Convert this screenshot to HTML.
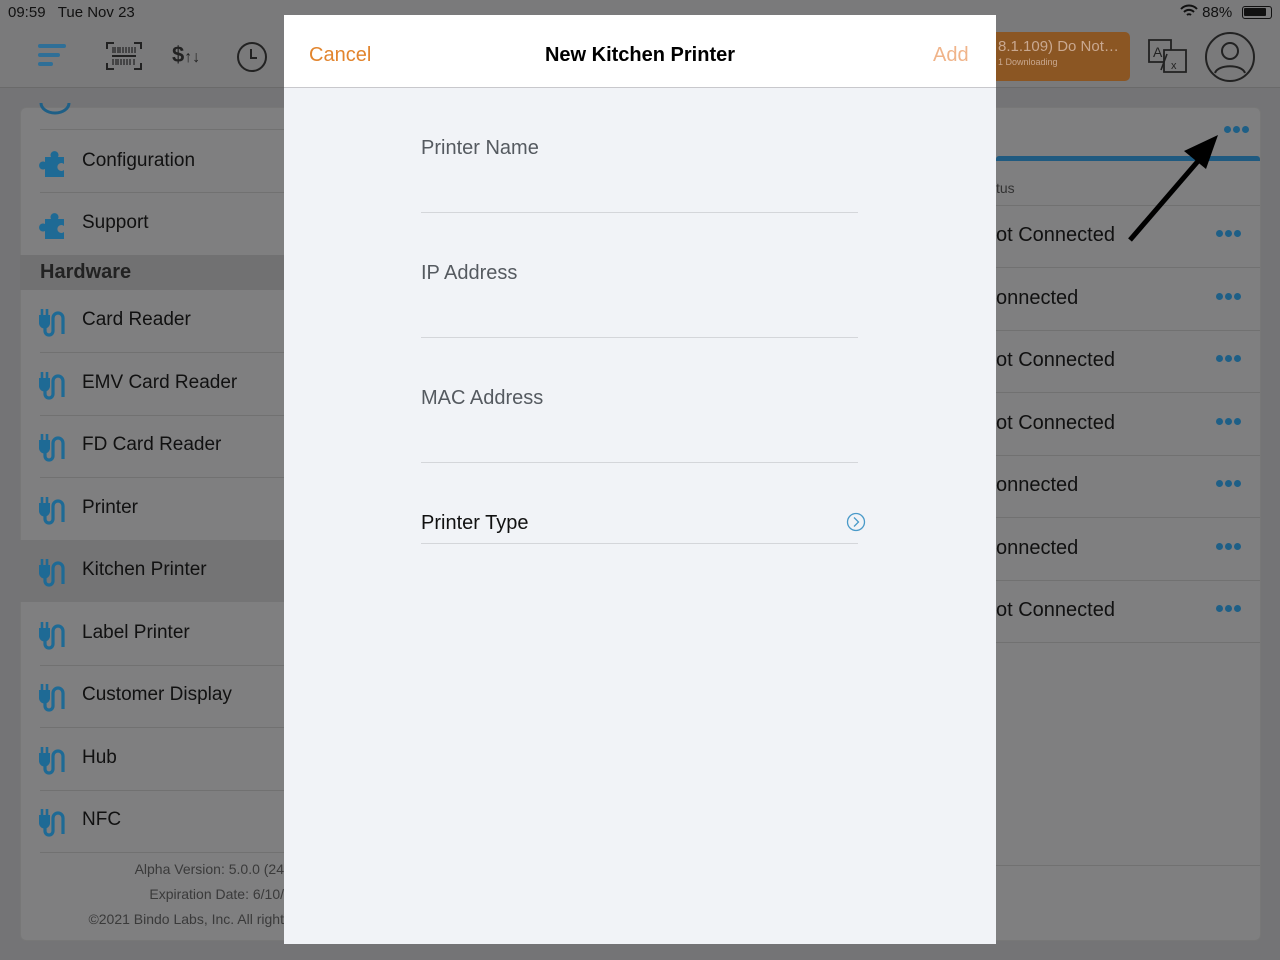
<!DOCTYPE html>
<html><head><meta charset="utf-8"><style>
*{margin:0;padding:0;box-sizing:border-box}
body{width:1280px;height:960px;background:#747476;font-family:"Liberation Sans",sans-serif;position:relative;overflow:hidden;color:#111}
.abs{position:absolute}
.top{left:0;top:0;width:1280px;height:88px;background:#7a7a7b;border-bottom:1px solid #6a6a6a}
.card{background:#7f7f80;border:1px solid #777;border-radius:6px}
.row{position:absolute;left:0;width:264px;height:62px;font-size:19px}
.row span{position:absolute;left:62px;top:19px}
.row svg{position:absolute;left:18px;top:16px}
.sep{position:absolute;left:20px;width:260px;height:1px;background:#717171}
.rrow{position:absolute;left:996px;width:264px;height:62px;border-bottom:1px solid #717171;font-size:20px}
.rrow span{position:absolute;left:0;top:18px;overflow:hidden;white-space:nowrap}
.dots{position:absolute;left:220px;top:24px;display:flex;gap:2px;line-height:0}
.dots i{display:block;width:7px;height:7px;border-radius:50%;background:#1e5f86}
.modal{left:284px;top:15px;width:712px;height:929px;background:#f1f3f7}
.mh{left:0;top:0;width:712px;height:73px;background:#fff;border-bottom:1px solid #c8c8cc}
.lbl{position:absolute;left:137px;font-size:20px;color:#555a60}
.line{position:absolute;left:137px;width:437px;height:1px;background:#d4d6da}
</style></head><body>
<div class="abs top"></div>
<div class="abs" style="left:8px;top:4px;font-size:15px;color:#111">09:59&nbsp;&nbsp; Tue Nov 23</div>
<div class="abs" style="left:1180px;top:4px;font-size:15px;color:#111">
<svg width="18" height="14" viewBox="0 0 18 14" style="vertical-align:-1px"><path d="M1 5a11 11 0 0 1 16 0M4 8a7 7 0 0 1 10 0M7 11a3 3 0 0 1 4 0" stroke="#111" stroke-width="2" fill="none"/></svg> 88%</div>
<div class="abs" style="left:1242px;top:6px;width:30px;height:13px;border:1.5px solid #111;border-radius:3px;padding:1px"><div style="width:22px;height:8px;background:#111;border-radius:1px"></div></div>
<svg class="abs" style="left:38px;top:44px" width="30" height="24"><rect x="0" y="0" width="28" height="4" rx="2" fill="#2f6f97"/><rect x="0" y="9" width="22" height="4" rx="2" fill="#2f6f97"/><rect x="0" y="18" width="15" height="4" rx="2" fill="#2f6f97"/></svg>
<svg class="abs" style="left:106px;top:42px" width="36" height="28"><path d="M1 7V1h7M28 1h7v6M1 21v6h7M35 21v6h-7" stroke="#222" stroke-width="2" fill="none"/><rect x="6" y="13" width="24" height="2" fill="#222"/><path d="M7 5v6M9 5v6M12 5v6M14 5v6M17 5v6M20 5v6M23 5v6M26 5v6M29 5v6M7 17v6M10 17v6M12 17v6M15 17v6M18 17v6M21 17v6M24 17v6M28 17v6" stroke="#222" stroke-width="1.2"/></svg>
<div class="abs" style="left:172px;top:42px;font-size:22px;font-weight:bold;color:#222">$<span style="font-size:16px">↑↓</span></div>
<svg class="abs" style="left:236px;top:41px" width="32" height="32"><circle cx="16" cy="16" r="14" stroke="#222" stroke-width="2" fill="none"/><path d="M15 8v9h6" stroke="#222" stroke-width="2" fill="none"/></svg>
<div class="abs" style="left:990px;top:32px;width:140px;height:49px;background:#8b5623;border-radius:5px;color:#c9a890;padding:6px 8px;font-size:15px">8.1.109) Do Not…<div style="font-size:9px;margin-top:2px">1 Downloading</div></div>
<svg class="abs" style="left:1148px;top:38px" width="40" height="36"><path d="M1 2h22v22H1z" stroke="#222" stroke-width="1.8" fill="none"/><path d="M16 12h22v22H16z" stroke="#222" stroke-width="1.8" fill="#7a7a7b"/><text x="5" y="19" font-size="14" font-family="Liberation Sans" fill="#222">A</text><path d="M13 32l6-16" stroke="#222" stroke-width="1.6"/><text x="23" y="31" font-size="11" font-family="Liberation Sans" fill="#222">x</text></svg>
<svg class="abs" style="left:1204px;top:31px" width="52" height="52"><circle cx="26" cy="26" r="24" stroke="#222" stroke-width="2" fill="none"/><circle cx="26" cy="20" r="8" stroke="#222" stroke-width="2" fill="none"/><path d="M11 42c3-9 27-9 30 0" stroke="#222" stroke-width="2" fill="none"/></svg>

<div class="abs card" style="left:20px;top:107px;width:290px;height:834px"></div>
<div class="abs" style="left:20px;top:107px;width:264px;height:834px">
<svg class="abs" style="left:18px;top:-4px" width="34" height="12"><path d="M3 0a14 10 0 0 0 28 0" stroke="#1e5f86" stroke-width="3" fill="none"/></svg>
<div class="sep" style="top:22px"></div>
<div class="row" style="top:24px"><svg width="32" height="32" viewBox="0 0 32 32"><path d="M7 10h6a4 4 0 1 1 7 0h6v7a4 4 0 1 0 0 6v7H7v-8a4 4 0 1 1 0-7z" fill="#1e6a95"/></svg><span>Configuration</span></div>
<div class="sep" style="top:85px"></div>
<div class="row" style="top:86px"><svg width="32" height="32" viewBox="0 0 32 32"><path d="M7 10h6a4 4 0 1 1 7 0h6v7a4 4 0 1 0 0 6v7H7v-8a4 4 0 1 1 0-7z" fill="#1e6a95"/></svg><span>Support</span></div>
<div class="abs" style="left:0;top:148px;width:264px;height:35px;background:#717172"><span style="position:absolute;left:20px;top:6px;font-size:20px;font-weight:bold;color:#222">Hardware</span></div>
</div>
<div class="abs" style="left:20px;top:540px;width:264px;height:62px;background:#747475"></div>

<div class="abs card" style="left:980px;top:107px;width:281px;height:834px"></div>
<div class="abs" style="left:996px;top:156px;width:264px;height:5px;background:#1f5a80;border-radius:3px 3px 0 0"></div>
<div class="abs" style="left:996px;top:180px;font-size:14px;color:#333">tus</div>
<div class="abs" style="left:996px;top:205px;width:264px;height:1px;background:#717171"></div>
<div class="dots" style="left:1224px;top:126px"><i></i><i></i><i></i></div>
<div class="abs" style="left:996px;top:865px;width:264px;height:1px;background:#717171"></div>

<div id="hw"></div>

<svg class="abs" style="left:1120px;top:125px" width="110" height="125"><path d="M10 115L85 28" stroke="#000" stroke-width="5"/><path d="M98 10L64 26L86 44z" fill="#000"/></svg>

<div class="abs modal">
<div class="abs mh">
<span class="abs" style="left:25px;top:29px;font-size:20px;color:#e2852e">Cancel</span>
<span class="abs" style="left:0;width:712px;text-align:center;top:29px;font-size:20px;color:#000;font-weight:bold">New Kitchen Printer</span>
<span class="abs" style="left:649px;top:29px;font-size:20px;color:#f0b48a">Add</span>
</div>
<div class="lbl" style="top:122px">Printer Name</div><div class="line" style="top:197px"></div>
<div class="lbl" style="top:247px">IP Address</div><div class="line" style="top:322px"></div>
<div class="lbl" style="top:372px">MAC Address</div><div class="line" style="top:447px"></div>
<div class="lbl" style="top:497px;color:#111">Printer Type</div><div class="line" style="top:528px"></div>
<svg class="abs" style="left:562px;top:497px" width="20" height="20"><circle cx="10" cy="10" r="8.5" stroke="#4a9ac9" stroke-width="1.3" fill="none"/><path d="M8 5.5l4.5 4.5L8 14.5" stroke="#4a9ac9" stroke-width="1.3" fill="none"/></svg>
</div>

<script>
var names=["Card Reader","EMV Card Reader","FD Card Reader","Printer","Kitchen Printer","Label Printer","Customer Display","Hub","NFC"];
var plug='<svg width="32" height="32" viewBox="0 0 32 32"><path d="M4 3v6M9 3v6" stroke="#1e6a95" stroke-width="2.6"/><path d="M1 9h11v8a5.5 5.5 0 0 1-11 0z" fill="#1e6a95"/><path d="M7 21v4a4 4 0 0 0 8 0V12a5 5 0 0 1 10 0v16" stroke="#1e6a95" stroke-width="3.2" fill="none"/></svg>';
var h="";
for(var i=0;i<names.length;i++){var t=290+i*62.5;
h+='<div class="row" style="left:20px;top:'+t+'px">'+plug+'<span>'+names[i]+'</span></div>';
if(i!=3&&i!=4)h+='<div class="sep" style="left:40px;width:244px;top:'+(t+62)+'px"></div>';}
h+='<div class="abs" style="left:20px;top:857px;width:264px;text-align:right;font-size:14px;color:#3a3a3a;line-height:25px;white-space:nowrap;overflow:hidden">Alpha Version: 5.0.0 (24<br>Expiration Date: 6/10/<br>©2021 Bindo Labs, Inc. All right</div>';
var st=["ot Connected","onnected","ot Connected","ot Connected","onnected","onnected","ot Connected"];
for(var j=0;j<st.length;j++){var y=206+j*62.5;
h+='<div class="rrow" style="top:'+y+'px"><span>'+st[j]+'</span><div class="dots"><i></i><i></i><i></i></div></div>';}
document.getElementById("hw").innerHTML=h;
</script>
</body></html>
